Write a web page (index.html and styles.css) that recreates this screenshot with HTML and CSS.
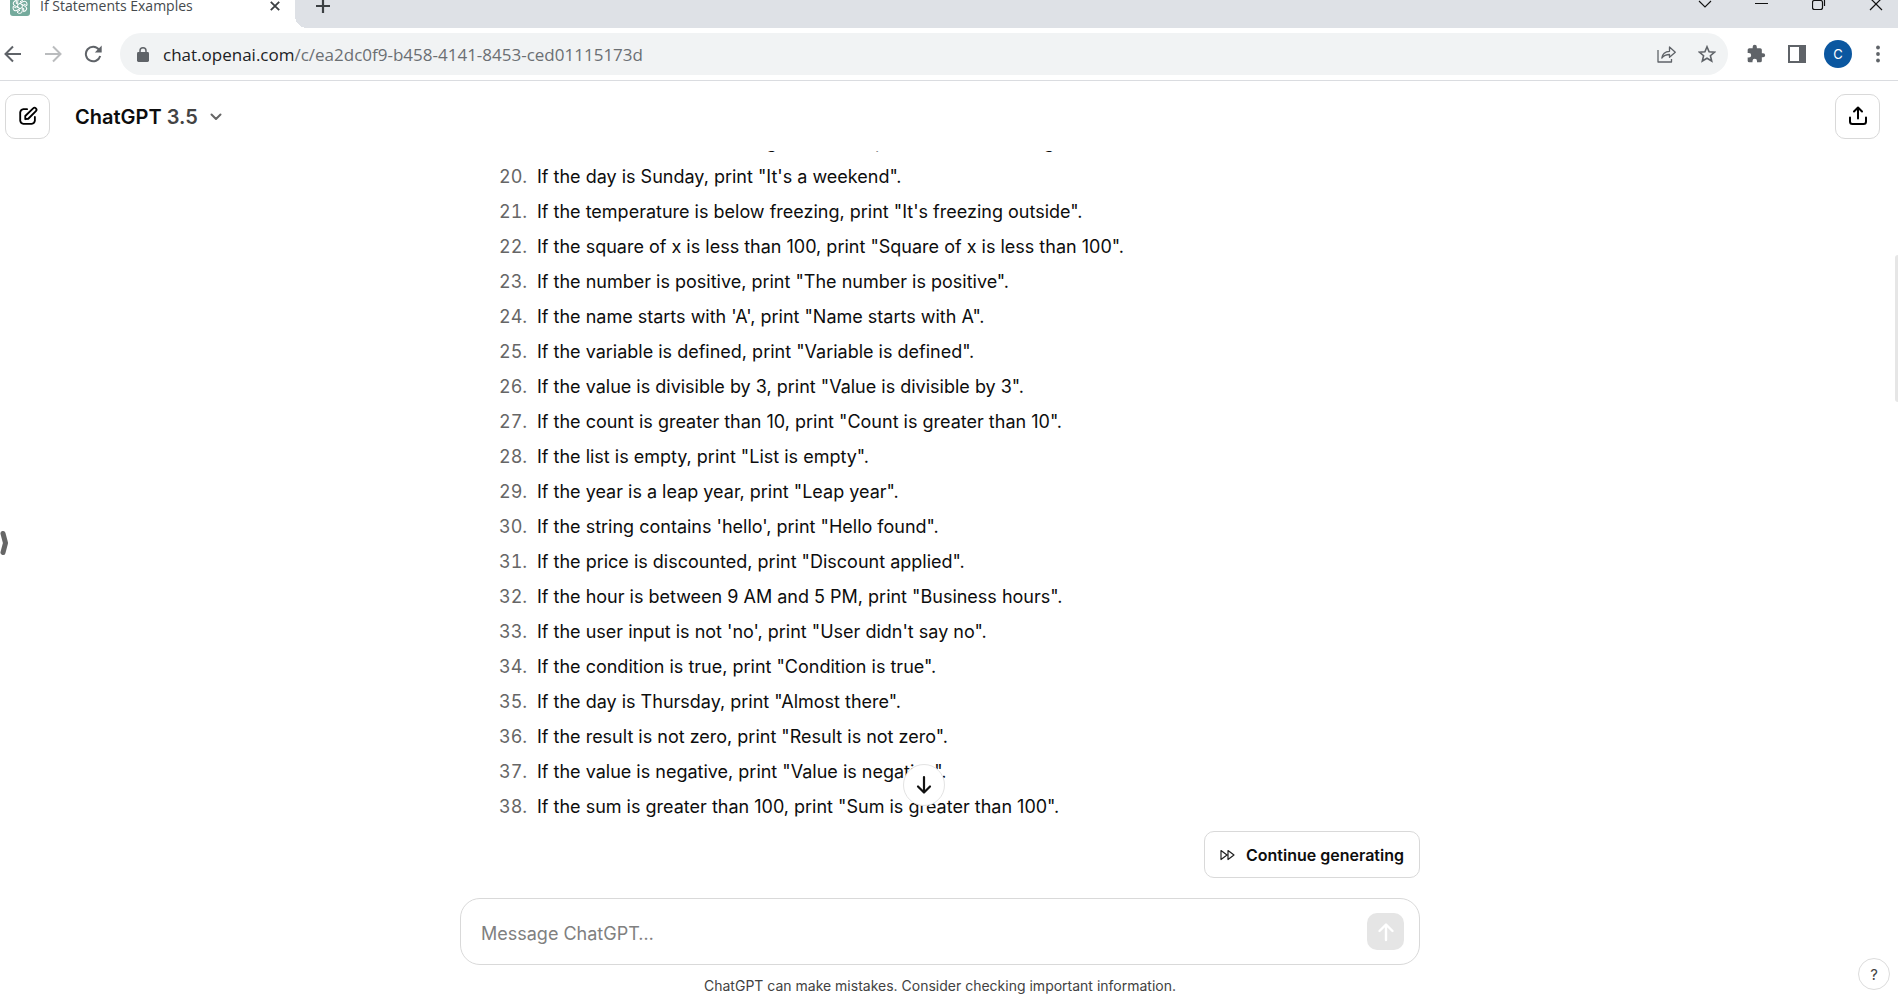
FILE: index.html
```html
<!DOCTYPE html>
<html lang="en">
<head>
<meta charset="utf-8">
<title>If Statements Examples</title>
<link rel="stylesheet" href="styles.css">
</head>
<body>
<div class="tab-strip">
  <div class="tab">
    <svg class="tab-logo" width="20" height="20" viewBox="0 0 20 20"><rect width="20" height="20" rx="3" fill="#74aa9c"/><g fill="none" stroke="#fff" stroke-width="1"><path id="petal" d="M10 7.4 L7.700 8.700 V5.400 Q7.700 2.600 10.200 2.600 Q12 2.600 13 4 L10 5.800"/><use href="#petal" transform="rotate(60 10 10)"/><use href="#petal" transform="rotate(120 10 10)"/><use href="#petal" transform="rotate(180 10 10)"/><use href="#petal" transform="rotate(240 10 10)"/><use href="#petal" transform="rotate(300 10 10)"/></g></svg>
    <span class="tab-title">If Statements Examples</span>
    <button class="plain" aria-label="Close tab"><svg width="10" height="10" viewBox="0 0 10 10"><path d="M.8 .8 9.2 9.2M9.2 .8 .8 9.2" stroke="#3c4043" stroke-width="1.8"/></svg></button>
  </div>
  <button class="plain new-tab" aria-label="New tab"><svg width="16" height="16" viewBox="0 0 16 16"><path d="M8 1V15M1 8H15" stroke="#3c4043" stroke-width="2.2"/></svg></button>
  <div class="window-controls">
    <button class="plain" aria-label="Search tabs"><svg width="14" height="14" viewBox="0 0 14 14"><path d="M1 4 7 10 13 4" fill="none" stroke="#111" stroke-width="1.1"/></svg></button>
    <button class="plain" aria-label="Minimize"><svg width="14" height="14" viewBox="0 0 14 14"><path d="M0 6.5H13" stroke="#111"/></svg></button>
    <button class="plain" aria-label="Restore"><svg width="14" height="14" viewBox="0 0 14 14"><path d="M.5 5.500Q.5 3.500 2.500 3.500H8.500Q10.500 3.500 10.500 5.500V10.500Q10.500 12.500 8.500 12.500H2.500Q.5 12.500 .5 10.500ZM3 1H10Q12.500 1 12.500 4V9" fill="none" stroke="#111" stroke-width="1.2"/></svg></button>
    <button class="plain" aria-label="Close window"><svg width="14" height="14" viewBox="0 0 14 14"><path d="M1 1 13 13M13 1 1 13" stroke="#111" stroke-width="1.2"/></svg></button>
  </div>
</div>

<div class="toolbar">
  <button class="plain" aria-label="Back"><svg width="18" height="18" viewBox="0 0 18 18"><path d="M17 9H2M9 1.500 1.500 9 9 16.500" fill="none" stroke="#5f6368" stroke-width="2"/></svg></button>
  <button class="plain" aria-label="Forward"><svg width="18" height="18" viewBox="0 0 18 18"><path d="M1 9H16M9 1.500 16.500 9 9 16.500" fill="none" stroke="#babcbe" stroke-width="2"/></svg></button>
  <button class="plain" aria-label="Reload"><svg width="18" height="18" viewBox="0 0 18 18"><path d="M15 4.600A7.300 7.300 0 1 0 16.200 11" fill="none" stroke="#5f6368" stroke-width="2"/><path d="M17.700 .6V7.500H10.800Z" fill="#5f6368"/></svg></button>
  <div class="address">
    <svg width="12" height="15" viewBox="0 0 12 15"><rect x="0" y="5" width="12" height="10" rx="1.400" fill="#5f6368"/><path d="M3 6V3.800a3 3 0 0 1 6 0V6" fill="none" stroke="#5f6368" stroke-width="1.500"/></svg>
    <span class="url"><b>chat.openai.com</b>/c/ea2dc0f9-b458-4141-8453-ced01115173d</span>
    <button class="plain" aria-label="Share this page"><svg width="20" height="18" viewBox="0 0 20 18"><path d="M1 5V17H14.500V14M4.800 13C5.500 8.500 8 6.500 12.500 6.300V2L18.300 7.200 12.500 12.300V9.500C9 9.500 7 10.300 4.800 13Z" fill="none" stroke="#5f6368" stroke-width="1.300" stroke-linejoin="round"/></svg></button>
    <button class="plain" aria-label="Bookmark this tab"><svg width="18" height="18" viewBox="0 0 18 18"><path d="M9 1.800 11.100 6.700 16.600 7.200 12.400 10.700 13.700 16 9 13.200 4.300 16 5.600 10.700 1.400 7.200 6.900 6.700Z" fill="none" stroke="#5f6368" stroke-width="1.600"/></svg></button>
  </div>
  <button class="plain" aria-label="Extensions"><svg width="20" height="20" viewBox="0 0 24 24"><path d="M20.500 11H19V7a2 2 0 0 0-2-2h-4V3.500a2.500 2.500 0 0 0-5 0V5H4a2 2 0 0 0-2 2v3.800h1.500a2.700 2.700 0 0 1 0 5.400H2V20a2 2 0 0 0 2 2h3.800v-1.500a2.700 2.700 0 0 1 5.400 0V22H17a2 2 0 0 0 2-2v-4h1.500a2.500 2.500 0 0 0 0-5z" fill="#5f6368"/></svg></button>
  <button class="plain" aria-label="Side panel"><svg width="18" height="18" viewBox="0 0 18 18"><rect x="1" y="1" width="16" height="16" fill="#fff" stroke="#5f6368" stroke-width="2"/><path d="M11 1H17V17H11Z" fill="#5f6368"/></svg></button>
  <button class="plain avatar" aria-label="Profile">C</button>
  <button class="plain" aria-label="Browser menu"><svg width="4" height="18" viewBox="0 0 4 18"><g fill="#5f6368"><circle cx="2" cy="2.500" r="1.900"/><circle cx="2" cy="9" r="1.900"/><circle cx="2" cy="15.500" r="1.900"/></g></svg></button>
</div>

<main class="page">
  <header class="page-header">
    <button class="square" aria-label="New chat"><svg width="22" height="22" viewBox="0 0 24 24"><path d="M11 4.500H7A4 4 0 0 0 3.500 8V17A4 4 0 0 0 7 20.500H16A4 4 0 0 0 19.500 17V13M9 15.500V12L17.600 3.600A1.900 1.900 0 0 1 20.600 6.600L12.300 15Z" fill="none" stroke="#000" stroke-width="2" stroke-linejoin="round" stroke-linecap="round"/></svg></button>
    <button class="plain model">ChatGPT <span>3.5</span><svg width="12" height="8" viewBox="0 0 12 8"><path d="M1.500 1.500 6 6 10.500 1.500" fill="none" stroke="#666" stroke-width="2" stroke-linecap="round" stroke-linejoin="round"/></svg></button>
    <button class="square share" aria-label="Share chat"><svg width="20" height="20" viewBox="0 0 20 20"><path d="M2 11.500V15.500A2.500 2.500 0 0 0 4.500 18H15.500A2.500 2.500 0 0 0 18 15.500V11.500M10 12.500V2M6 5.500 10 1.500 14 5.500" fill="none" stroke="#000" stroke-width="2" stroke-linecap="round" stroke-linejoin="round"/></svg></button>
  </header>

  <section class="thread">
    <ol class="answer" start="19">
      <li>If the current user role is a grandfather, print "Welcome the guest".</li>
      <li>If the day is Sunday, print "It's a weekend".</li>
      <li>If the temperature is below freezing, print "It's freezing outside".</li>
      <li>If the square of x is less than 100, print "Square of x is less than 100".</li>
      <li>If the number is positive, print "The number is positive".</li>
      <li>If the name starts with 'A', print "Name starts with A".</li>
      <li>If the variable is defined, print "Variable is defined".</li>
      <li>If the value is divisible by 3, print "Value is divisible by 3".</li>
      <li>If the count is greater than 10, print "Count is greater than 10".</li>
      <li>If the list is empty, print "List is empty".</li>
      <li>If the year is a leap year, print "Leap year".</li>
      <li>If the string contains 'hello', print "Hello found".</li>
      <li>If the price is discounted, print "Discount applied".</li>
      <li>If the hour is between 9 AM and 5 PM, print "Business hours".</li>
      <li>If the user input is not 'no', print "User didn't say no".</li>
      <li>If the condition is true, print "Condition is true".</li>
      <li>If the day is Thursday, print "Almost there".</li>
      <li>If the result is not zero, print "Result is not zero".</li>
      <li>If the value is negative, print "Value is negative".</li>
      <li>If the sum is greater than 100, print "Sum is greater than 100".</li>
    </ol>
  </section>

  <form class="composer">
    <button type="button" class="to-bottom" aria-label="Scroll to bottom"><svg width="20" height="20" viewBox="0 0 20 20"><path d="M10 2V17M4 11.500 10 17.500 16 11.500" fill="none" stroke="#111" stroke-width="2.200" stroke-linecap="round" stroke-linejoin="round"/></svg></button>
    <button type="button" class="continue"><svg width="15" height="12" viewBox="0 0 15 12"><path d="M1 1.500 7 6 1 10.500ZM8 1.500 14 6 8 10.500Z" fill="none" stroke="#222" stroke-width="1.200" stroke-linejoin="round"/></svg>Continue generating</button>
    <div class="field">
      <input type="text" aria-label="Message" placeholder="Message ChatGPT…">
      <button type="button" class="send" aria-label="Send message"><svg width="20" height="20" viewBox="0 0 20 20"><path d="M10 18V3M3.500 9 10 2.500 16.500 9" fill="none" stroke="#fff" stroke-width="2.400" stroke-linecap="round" stroke-linejoin="round"/></svg></button>
    </div>
    <p class="note">ChatGPT can make mistakes. Consider checking important information.</p>
  </form>

  <button class="plain sidebar-toggle" aria-label="Open sidebar"><svg width="9" height="26" viewBox="0 0 9 26"><path d="M3 3.500 5.500 13 3 22.500" fill="none" stroke="#666" stroke-width="5" stroke-linecap="round" stroke-linejoin="round"/></svg></button>
  <div class="scroll-thumb"></div>
  <button class="help" aria-label="Help">?</button>
</main>
</body>
</html>
```
FILE: styles.css
```css
* { box-sizing: border-box; }

body {
  margin: 0;
  height: 100vh;
  display: flex;
  flex-direction: column;
  overflow: hidden;
  background: #fff;
  color: #0d0d0d;
  font-family: Inter, "Liberation Sans", sans-serif;
  font-size: 18px;
}

button { font: inherit; color: inherit; cursor: pointer; }
svg { display: block; flex: none; }

.plain {
  display: flex;
  align-items: center;
  padding: 0;
  border: 0;
  background: none;
}

/* Browser tabs */
.tab-strip {
  display: flex;
  flex: none;
  height: 28px;
  background: #dee1e6;
  font-family: "Open Sans", "Noto Sans", sans-serif;
}
.tab {
  display: flex;
  align-items: center;
  width: 295px;
  padding: 0 15px 16px 10px;
  background: #fff;
  position: relative;
}
.tab::after {
  content: "";
  position: absolute;
  left: 100%;
  bottom: 0;
  width: 12px;
  height: 12px;
  background: radial-gradient(circle at 12px 0, transparent 12px, #fff 12px);
}
.tab-logo { margin-right: 10px; }
.tab-title {
  flex: 1;
  font-size: 14px;
  line-height: 20px;
  color: #45494d;
  white-space: nowrap;
}
.new-tab { padding: 0 0 16px 20px; }
.window-controls {
  display: flex;
  align-items: center;
  gap: 43px;
  margin-left: auto;
  padding: 0 15px 20px 0;
}

/* Browser toolbar */
.toolbar {
  display: flex;
  align-items: center;
  flex: none;
  gap: 22px;
  height: 53px;
  padding: 0 18px 0 4px;
  border-bottom: 1px solid #dadce0;
}
.address {
  display: flex;
  flex: 1;
  align-items: center;
  height: 42px;
  margin: 0 -4px;
  padding: 0 12px 0 17px;
  border-radius: 21px;
  background: #f1f3f4;
}
.url {
  flex: 1;
  margin-left: 14px;
  font-family: "Open Sans", "Noto Sans", sans-serif;
  font-size: 17px;
  color: #6b6f73;
}
.url b { font-weight: 400; color: #202124; }
.address button { margin-left: 21px; }
.avatar {
  justify-content: center;
  width: 28px;
  height: 28px;
  border-radius: 50%;
  background: #0b57a0;
  color: #fff;
  font-size: 13px;
}
.toolbar .avatar { margin: 0 2px 0 -4px; }

/* Chat page */
.page {
  position: relative;
  display: flex;
  flex: 1;
  flex-direction: column;
  min-height: 0;
}
.page-header {
  display: flex;
  align-items: center;
  flex: none;
  height: 70px;
  padding: 0 18px 0 5px;
}
.square {
  display: grid;
  place-items: center;
  width: 45px;
  height: 45px;
  padding: 0;
  border: 1px solid #d9d9d9;
  border-radius: 10px;
  background: #fff;
}
.share { margin-left: auto; }
.model {
  margin-left: 25px;
  padding-top: 2px;
  font-size: 20px;
  font-weight: 600;
  white-space: pre;
}
.model span { color: #444; }
.model svg { margin-left: 12px; }

.thread {
  display: flex;
  flex: 1;
  flex-direction: column;
  justify-content: flex-end;
  min-height: 0;
  margin-right: 18px;
  overflow: hidden;
}
.answer {
  width: 100%;
  max-width: 960px;
  margin: 0 auto;
  padding: 0 0 7px 72px;
}
.answer li {
  padding-left: 5px;
  line-height: 35px;
}
.answer li::marker { color: #666; }

.composer {
  position: relative;
  display: flex;
  flex: none;
  flex-direction: column;
  width: 960px;
  max-width: calc(100% - 18px);
  margin: 0 auto;
  left: -9px;
}
.continue {
  display: flex;
  align-items: center;
  align-self: flex-end;
  gap: 11px;
  height: 47px;
  padding: 0 15px;
  border: 1px solid #d9d9d9;
  border-radius: 10px;
  background: #fff;
  font-size: 16px;
  font-weight: 600;
}
.field {
  display: flex;
  align-items: center;
  height: 67px;
  margin-top: 20px;
  padding: 0 15px 0 20px;
  border: 1px solid #d9d9d9;
  border-radius: 20px;
}
.field input {
  flex: 1;
  min-width: 0;
  padding: 4px 0 0;
  border: 0;
  outline: 0;
  background: none;
  font: inherit;
}
.field input::placeholder { color: #808080; opacity: 1; }
.send {
  display: grid;
  place-items: center;
  width: 37px;
  height: 37px;
  padding: 0;
  border: 0;
  border-radius: 10px;
  background: #e5e5e5;
}
.note {
  margin: 10px 0 5px;
  font-size: 14px;
  line-height: 22px;
  text-align: center;
  color: #424242;
}

/* Controls floating over the conversation */
.to-bottom {
  position: absolute;
  left: 443px;
  bottom: 196px;
  display: grid;
  place-items: center;
  width: 42px;
  height: 42px;
  padding: 0;
  border: 1px solid #e3e3e3;
  border-radius: 50%;
  background: #fff;
}
.sidebar-toggle {
  position: absolute;
  left: 0;
  top: 449px;
}
.scroll-thumb {
  position: absolute;
  right: 0;
  top: 174px;
  width: 3px;
  height: 147px;
  border-radius: 3px 0 0 3px;
  background: #e6e6e6;
}
.help {
  position: absolute;
  right: 8px;
  bottom: 12px;
  width: 32px;
  height: 32px;
  padding: 0;
  border: 1px solid #dcdcdc;
  border-radius: 50%;
  background: #fff;
  color: #444;
  font-size: 15px;
}
```
